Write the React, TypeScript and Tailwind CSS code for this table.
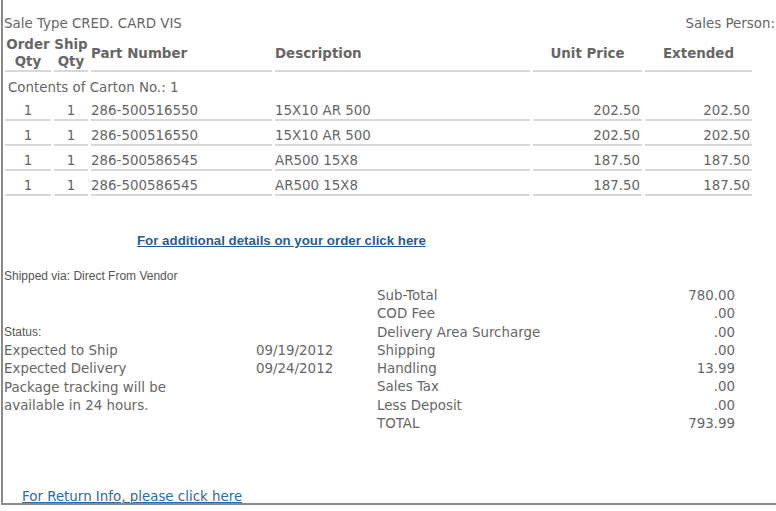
import React from "react";

const items = [
  { order: "1", ship: "1", part: "286-500516550", desc: "15X10 AR 500", unit: "202.50", ext: "202.50" },
  { order: "1", ship: "1", part: "286-500516550", desc: "15X10 AR 500", unit: "202.50", ext: "202.50" },
  { order: "1", ship: "1", part: "286-500586545", desc: "AR500 15X8", unit: "187.50", ext: "187.50" },
  { order: "1", ship: "1", part: "286-500586545", desc: "AR500 15X8", unit: "187.50", ext: "187.50" },
];

const totals = [
  ["Sub-Total", "780.00"],
  ["COD Fee", ".00"],
  ["Delivery Area Surcharge", ".00"],
  ["Shipping", ".00"],
  ["Handling", "13.99"],
  ["Sales Tax", ".00"],
  ["Less Deposit", ".00"],
  ["TOTAL", "793.99"],
];

const verdana = "font-['DejaVu_Sans',Verdana,sans-serif]";
const arial = "font-['Liberation_Sans',Arial,sans-serif]";
const cols = "grid grid-cols-[46px_34px_181px_255px_109px_107px] gap-x-[3px]";
const cell = "border-b-2 border-[#d8d8d8]";

export default function App() {
  return (
    <div className="w-[776px] h-[511px] bg-white overflow-hidden">
      <div className={`ml-[1px] h-[505px] border-l-2 border-b-2 border-[#8a8a8a] text-[#666] text-[13.4px] ${verdana} flex flex-col`}>
        {/* Header */}
        <div className="flex justify-between pt-[16px] pl-[1px] pr-[1px] leading-[16px]">
          <span>Sale Type CRED. CARD VIS</span>
          <span>Sales Person:</span>
        </div>

        {/* Item table */}
        <div className={`${cols} ml-[2px] mt-[3px]`}>
          <div className={`${cell} font-bold text-center leading-[17px] pt-[1px]`}>Order<br />Qty</div>
          <div className={`${cell} font-bold text-center leading-[17px] pt-[1px]`}>Ship<br />Qty</div>
          <div className={`${cell} font-bold flex items-center pt-[3px]`}>Part Number</div>
          <div className={`${cell} font-bold flex items-center pt-[3px]`}>Description</div>
          <div className={`${cell} font-bold flex items-center justify-center pt-[3px]`}>Unit Price</div>
          <div className={`${cell} font-bold flex items-center justify-center pt-[3px]`}>Extended</div>
        </div>
        <div className="pl-[5px] pt-[8px] leading-[16px] h-[24px]">Contents of Carton No.: 1</div>
        <div className={`${cols} ml-[2px]`}>
          {items.map((it, i) => (
            <React.Fragment key={i}>
              <div className={`${cell} h-[25px] pt-[7px] leading-[16px] text-center`}>{it.order}</div>
              <div className={`${cell} h-[25px] pt-[7px] leading-[16px] text-center`}>{it.ship}</div>
              <div className={`${cell} h-[25px] pt-[7px] leading-[16px]`}>{it.part}</div>
              <div className={`${cell} h-[25px] pt-[7px] leading-[16px]`}>{it.desc}</div>
              <div className={`${cell} h-[25px] pt-[7px] leading-[16px] text-right pr-[2px]`}>{it.unit}</div>
              <div className={`${cell} h-[25px] pt-[7px] leading-[16px] text-right pr-[2px]`}>{it.ext}</div>
            </React.Fragment>
          ))}
        </div>

        {/* Details link */}
        <div className="pl-[134px] pt-[37px] leading-[16px]">
          <a href="#" className={`${arial} text-[13.3px] font-bold text-[#1f5f9c] underline`}>
            For additional details on your order click here
          </a>
        </div>

        <div className={`${arial} text-[12px] pl-[1px] pt-[20px] leading-[14px] text-[#555]`}>Shipped via: Direct From Vendor</div>

        {/* Status + totals */}
        <div className="flex pt-[4px]">
          <div className="w-[374px] pl-[1px] pt-[35px]">
            <div className={`${arial} text-[12px] leading-[20px] text-[#555]`}>Status:</div>
            <div className="flex leading-[18.4px]">
              <span className="w-[252px]">Expected to Ship</span>
              <span>09/19/2012</span>
            </div>
            <div className="flex leading-[18.4px]">
              <span className="w-[252px]">Expected Delivery</span>
              <span>09/24/2012</span>
            </div>
            <div className="leading-[18.4px]">Package tracking will be<br />available in 24 hours.</div>
          </div>
          <div className="w-[358px] flex flex-col">
            {totals.map(([k, v]) => (
              <div key={k} className="flex justify-between leading-[18.3px]">
                <span>{k}</span>
                <span>{v}</span>
              </div>
            ))}
          </div>
        </div>

        {/* Return link */}
        <div className="mt-auto pl-[19px] leading-[12px]">
          <a href="#" className="text-[#2a6ca6] underline">For Return Info, please click here</a>
        </div>
      </div>
    </div>
  );
}
